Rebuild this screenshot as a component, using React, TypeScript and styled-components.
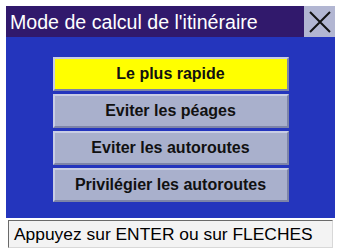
import styled, { createGlobalStyle } from "styled-components";

const GlobalStyle = createGlobalStyle`
  html, body {
    margin: 0;
    padding: 0;
    background: #ffffff;
  }
  body {
    font-family: "Liberation Sans", Arial, sans-serif;
  }
`;

const options = [
  "Le plus rapide",
  "Eviter les péages",
  "Eviter les autoroutes",
  "Privilégier les autoroutes",
];

const App = () => {
  return (
    <>
      <GlobalStyle />
      <Screen>
        <TitleBar>
          <Title>Mode de calcul de l'itinéraire</Title>
          <CloseButton type="button" aria-label="Fermer">
            <svg width="24" height="24" viewBox="0 0 24 24">
              <path d="M2 2 L22 22 M22 2 L2 22" stroke="#111" strokeWidth="2" />
            </svg>
          </CloseButton>
        </TitleBar>

        <Panel>
          {options.map((label, i) => (
            <Option key={label} $selected={i === 0}>
              {label}
            </Option>
          ))}
        </Panel>

        <StatusBar>Appuyez sur ENTER ou sur FLECHES</StatusBar>
      </Screen>
    </>
  );
};

export default App;

const Screen = styled.div`
  width: 329px;
  padding-top: 6px;
  margin-left: 6px;
  display: flex;
  flex-direction: column;
`;

const TitleBar = styled.div`
  height: 31px;
  display: flex;
  align-items: stretch;
  background: #31196c;
`;

const Title = styled.div`
  flex: 1;
  padding-left: 4px;
  display: flex;
  align-items: center;
  padding-top: 1px;
  font-size: 19.6px;
  color: #ffffff;
  white-space: nowrap;
`;

const CloseButton = styled.button`
  width: 31px;
  margin-right: 0;
  padding: 0;
  border: none;
  background: #b2b6d2;
  display: flex;
  align-items: center;
  justify-content: center;
`;

const Panel = styled.div`
  height: 181px;
  background: #2435bd;
  display: flex;
  flex-direction: column;
  align-items: center;
  gap: 3px;
  padding-top: 20px;
  box-sizing: border-box;
`;

const Option = styled.div<{ $selected?: boolean }>`
  width: 236px;
  height: 34px;
  box-sizing: border-box;
  display: flex;
  align-items: center;
  justify-content: center;
  font-size: 16px;
  font-weight: 700;
  color: #111111;
  background: ${(p) => (p.$selected ? "#ffff00" : "#a9b0cc")};
  border: 2px solid;
  border-color: #c8cde4 #7d84a8 #7d84a8 #c8cde4;
`;

const StatusBar = styled.div`
  margin: 2px 2px 0 2px;
  height: 28px;
  box-sizing: border-box;
  display: flex;
  align-items: center;
  padding-left: 5px;
  padding-top: 1px;
  font-size: 17.4px;
  color: #000000;
  white-space: nowrap;
  background: #f3f3f3;
  border: 1px solid;
  border-color: #6a6a6a #d8d8d8 #d8d8d8 #6a6a6a;
`;
